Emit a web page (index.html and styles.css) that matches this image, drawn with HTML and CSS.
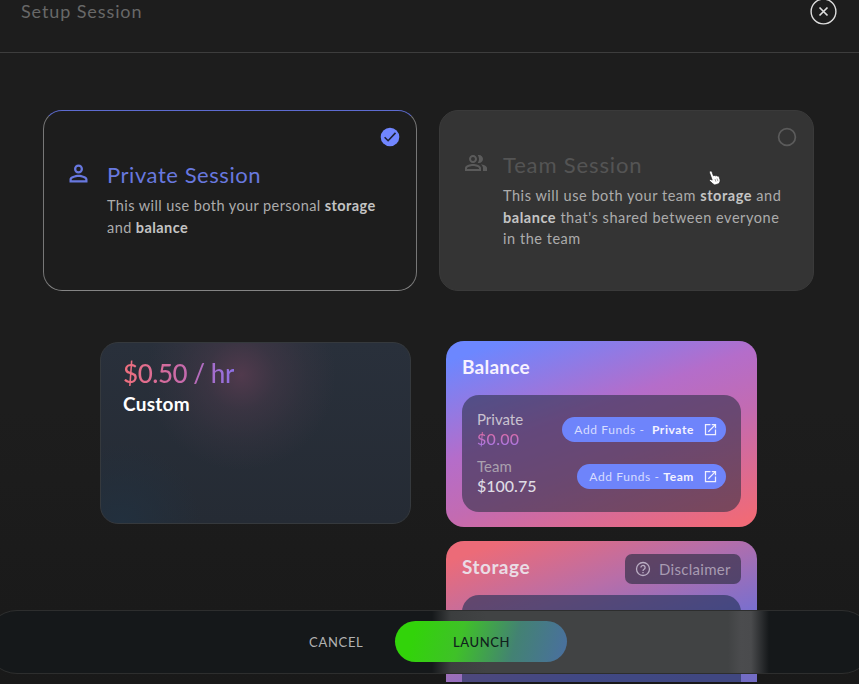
FILE: index.html
```html
<!DOCTYPE html>
<html lang="en">
<head>
<meta charset="utf-8">
<title>Setup Session</title>
<link rel="stylesheet" href="styles.css">
</head>
<body>
<div class="app">
  <header class="header">
    <h1 class="title">Setup Session</h1>
    <button class="close" aria-label="Close"><svg viewBox="0 0 27 27"><circle cx="13.5" cy="13.5" r="12.4"/><path d="M9.500 9.500l8 8M17.500 9.500l-8 8" stroke-width="1.700"/></svg></button>
  </header>
  <main class="main">
    <section class="sessions">
      <article class="session selected">
        <svg class="session-icon" viewBox="0 0 24 24"><path d="M12 6a2 2 0 1 1 0 4 2 2 0 0 1 0-4m0 9c2.7 0 5.8 1.29 6 2v1H6v-1c.2-.7 3.3-2 6-2m0-11C9.800 4 8 5.800 8 8s1.800 4 4 4 4-1.800 4-4-1.800-4-4-4m0 9c-2.700 0-8 1.340-8 4v3h16v-3c0-2.660-5.300-4-8-4"/></svg>
        <div class="session-body">
          <h2 class="session-title">Private Session</h2>
          <p class="session-text">This will use both your personal <b>storage</b><br>and <b>balance</b></p>
        </div>
        <svg class="mark" viewBox="0 0 20 20"><circle cx="10" cy="10" r="9.300" fill="#7186ff"/><path d="M4.600 10.200l3.500 3.500 7.400-7.800" fill="none" stroke="#1e2134" stroke-width="1.600"/></svg>
      </article>
      <article class="session team">
        <svg class="session-icon" viewBox="0 0 24 24"><path d="M16.670 13.130C18.040 14.060 19 15.320 19 17v3h4v-3c0-2.180-3.570-3.470-6.330-3.870M15 12c2.210 0 4-1.790 4-4s-1.790-4-4-4c-.470 0-.910.100-1.330.240C14.500 5.270 15 6.580 15 8s-.500 2.730-1.330 3.760c.420.140.860.240 1.330.240M9 12c2.210 0 4-1.790 4-4s-1.790-4-4-4-4 1.790-4 4 1.790 4 4 4m0-6a2 2 0 1 1 0 4 2 2 0 0 1 0-4m0 7c-2.670 0-8 1.340-8 4v3h16v-3c0-2.660-5.330-4-8-4m6 5H3v-.990C3.200 16.290 6.300 15 9 15s5.800 1.290 6 2z"/></svg>
        <div class="session-body">
          <h2 class="session-title">Team Session</h2>
          <p class="session-text">This will use both your team <b>storage</b> and<br><b>balance</b> that's shared between everyone<br>in the team</p>
        </div>
        <svg class="mark" viewBox="0 0 20 20"><circle cx="10" cy="10" r="8.400" fill="none" stroke="#5b5b5b" stroke-width="1.700"/></svg>
        <svg class="cursor" viewBox="0 0 14 16"><path d="M2.300 1.200c.8-.4 1.500.1 1.800.9l1.300 3.700c.6-.6 1.500-.5 1.900.1.600-.5 1.500-.4 1.900.3.700-.4 1.600-.1 1.900.6l.9 2.800c.4 1.700-.3 3.300-1.300 4.100l-3.900 1.300c-1.500-.7-3.400-2.500-5-3.900-.8-.8 0-1.900 1.100-1.600l1.300.6L1.500 2.700c-.2-.6.1-1.200.8-1.500z"/><path class="lines" d="M7 9l.9 2.700M9 8.400l.9 2.700"/></svg>
      </article>
    </section>
    <section class="details">
      <article class="plan">
        <div class="price">$0.50 / hr</div>
        <div class="plan-name">Custom</div>
      </article>
      <div class="accounts">
        <article class="card balance">
          <h3 class="card-title">Balance</h3>
          <div class="panel">
            <div class="fund">
              <div><div class="label">Private</div><div class="amount zero">$0.00</div></div>
              <button class="add"><span>Add Funds -&nbsp; <b>Private</b></span><svg viewBox="0 0 24 24"><path d="M19 19H5V5h7V3H3v18h18v-9h-2zM14 3v2h3.600l-9.800 9.800 1.400 1.400L19 6.400V10h2V3z"/></svg></button>
            </div>
            <div class="fund second">
              <div><div class="label">Team</div><div class="amount">$100.75</div></div>
              <button class="add"><span>Add Funds - <b>Team</b></span><svg viewBox="0 0 24 24"><path d="M19 19H5V5h7V3H3v18h18v-9h-2zM14 3v2h3.600l-9.800 9.800 1.400 1.400L19 6.400V10h2V3z"/></svg></button>
            </div>
          </div>
        </article>
        <article class="card storage">
          <div class="storage-head">
            <h3 class="card-title">Storage</h3>
            <button class="disclaimer"><svg viewBox="0 0 16 16"><circle cx="8" cy="8" r="6.500"/><path d="M5.900 6.500a2.100 2.100 0 1 1 3.200 1.800C8.300 8.800 8 9.200 8 10"/><path d="M8 11v1.300"/></svg><span>Disclaimer</span></button>
          </div>
          <div class="panel"></div>
        </article>
      </div>
    </section>
  </main>
  <footer class="footer">
    <button class="cancel">CANCEL</button>
    <button class="launch">LAUNCH</button>
  </footer>
</div>
</body>
</html>
```

FILE: styles.css
```css
* { box-sizing: border-box; }
body { margin: 0; background: #1d1d1d; font-family: Lato, "Open Sans", sans-serif; }
button { border: 0; padding: 0; background: none; font: inherit; color: inherit; white-space: nowrap; }
h1, h2, h3, p { margin: 0; font-weight: 400; }
svg { display: block; flex: none; }
b { font-weight: 700; }
.app { position: relative; width: 859px; height: 684px; overflow: hidden; background: linear-gradient(#1d1d1d 60%, #191919); }
.header { display: flex; justify-content: space-between; height: 53px; padding: 0 22px 0 21px; border-bottom: 1px solid #3d3d3d; }
.title { font-size: 18px; line-height: 22px; letter-spacing: .9px; color: #686868; }
.close { width: 27px; height: 27px; margin-top: -2px; }
.close svg { width: 27px; height: 27px; fill: none; stroke: #dedede; stroke-width: 1.4; }
.main { height: 629px; padding: 57px 45px 0 42px; overflow: hidden; }
.sessions { display: grid; grid-template-columns: 374px 375px; gap: 22px; padding-left: 1px; }
.session { position: relative; display: flex; align-items: center; height: 181px; padding-left: 24px; border: 1px solid #858585; border-radius: 19px; white-space: nowrap; }
.selected { padding-left: 21px; border-color: #5d6bd0 #777 #858585; }
.team { background: #343434; border-color: #3a3a3a; }
.session-icon { width: 24px; height: 24px; margin-right: 15px; fill: #6878df; align-self: flex-start; margin-top: 40px; }
.selected .session-icon { width: 27px; height: 27px; margin-top: 49px; }
.team .session-icon { fill: #5b5b5b; }
.session-title { font-size: 22px; line-height: 30px; letter-spacing: .55px; color: #6878df; }
.selected .session-title { margin-top: -2px; }
.selected .session-text { margin-top: 5px; }
.team .session-title { margin-top: -1px; letter-spacing: .85px; color: #545454; }
.session-text { font-size: 14.5px; line-height: 21.6px; margin-top: 5px; letter-spacing: .42px; color: #acacac; }
.team .session-text { letter-spacing: .54px; }
.session-text b { color: #c4c4c4; }
.mark { position: absolute; top: 16px; right: 16px; width: 20px; height: 20px; }
.cursor { position: absolute; left: 268px; top: 59px; width: 14px; height: 16px; fill: #fff; stroke: #222; stroke-width: .7; }
.lines { fill: none; stroke: #777; }
.details { display: flex; align-items: flex-start; gap: 35px; margin: 50px 0 0 58px; }
.plan { width: 311px; height: 182px; margin-top: 1px; padding: 14px 22px; border: 1px solid #35393d; border-radius: 18px; background: radial-gradient(circle at 140px 32px, #513a4d 0, #49394a88 35px, #4b3b4b33 65px, transparent 95px), radial-gradient(circle at 20px 180px, #22303e, transparent 80px), linear-gradient(#29303b, #252b34); }
.price { width: max-content; font-size: 26px; line-height: 32px; letter-spacing: -.45px; font-weight: 500; color: transparent; background: linear-gradient(90deg, #f06f7c, #c66aac 55%, #8d70e5); background-clip: text; }
.plan-name { font-size: 19px; line-height: 24px; margin-top: 3px; letter-spacing: .25px; color: #fff; }
.plan-name, .card-title { font-weight: 700; }
.card { width: 311px; padding: 15px 16px; border-radius: 18px; }
.balance { height: 186px; background: linear-gradient(160deg, #6c87ff 7%, #b46dca 40%, #c36bb1 60%, #f06a77 96%); }
.storage { height: 186px; margin-top: 14px; background: linear-gradient(160deg, #ec6b78 7%, #b86ea8 33%, #766fd0 62%, #706abb); }
.card-title { font-size: 19px; line-height: 22px; letter-spacing: .25px; color: #f7f2ff; }
.panel { height: 117px; margin-top: 17px; padding: 15px 15px 0; border-radius: 17px; background: rgba(42, 47, 67, .58); }
.fund { display: flex; justify-content: space-between; }
.second { margin-top: 9px; }
.label { font-size: 15px; line-height: 19px; color: #c9c2d0; }
.second .label { color: #aaa0ae; }
.amount { width: max-content; font-size: 16px; line-height: 19px; font-weight: 500; color: #dedbe3; }
.zero { letter-spacing: .3px; color: transparent; background: linear-gradient(#ed6994, #a079ee); background-clip: text; }
.add { display: flex; align-items: center; height: 25px; margin-top: 7px; padding: 0 8px 0 12px; gap: 9px; border-radius: 13px; background: #6e84fb; color: #d7dcff; font-size: 12px; letter-spacing: .6px; }
.add b { color: #f4f2ff; }
.add svg { width: 15px; height: 15px; fill: #f0f0ff; }
.storage-head { display: flex; justify-content: space-between; height: 39px; }
.storage .card-title { letter-spacing: .5px; color: #eadce5; }
.storage .panel { margin-top: 0; background: rgba(33, 48, 85, .62); }
.disclaimer { display: flex; align-items: center; width: 116px; height: 30px; margin-top: -2px; padding-left: 10px; gap: 8px; border-radius: 7px; background: rgba(57, 51, 76, .72); color: #a89bb2; font-size: 15px; letter-spacing: .3px; }
.disclaimer svg { width: 16px; height: 16px; fill: none; stroke: #bbaec4; stroke-width: 1.3; }
.footer { position: absolute; left: -15px; right: -15px; top: 610px; height: 64px; display: flex; align-items: center; padding: 0 0 1px 323px; border: 1px solid #2d2e2e; border-radius: 32px; background: linear-gradient(90deg, #15181a 446px, #3c3e3f 465px, #414344 500px, #414344 742px, #4b4c4e 755px, #4a4b4d 765px, #15181a 783px); }
.cancel { font-size: 13px; letter-spacing: .7px; color: #b2b2b2; }
.launch { width: 172px; height: 41px; margin-left: 32px; border-radius: 21px; background: linear-gradient(105deg, #32d30a 12%, #3fc128 38%, #438273 69%, #49719b 96%); color: #10201d; font-size: 13px; font-weight: 500; letter-spacing: .6px; }
```
